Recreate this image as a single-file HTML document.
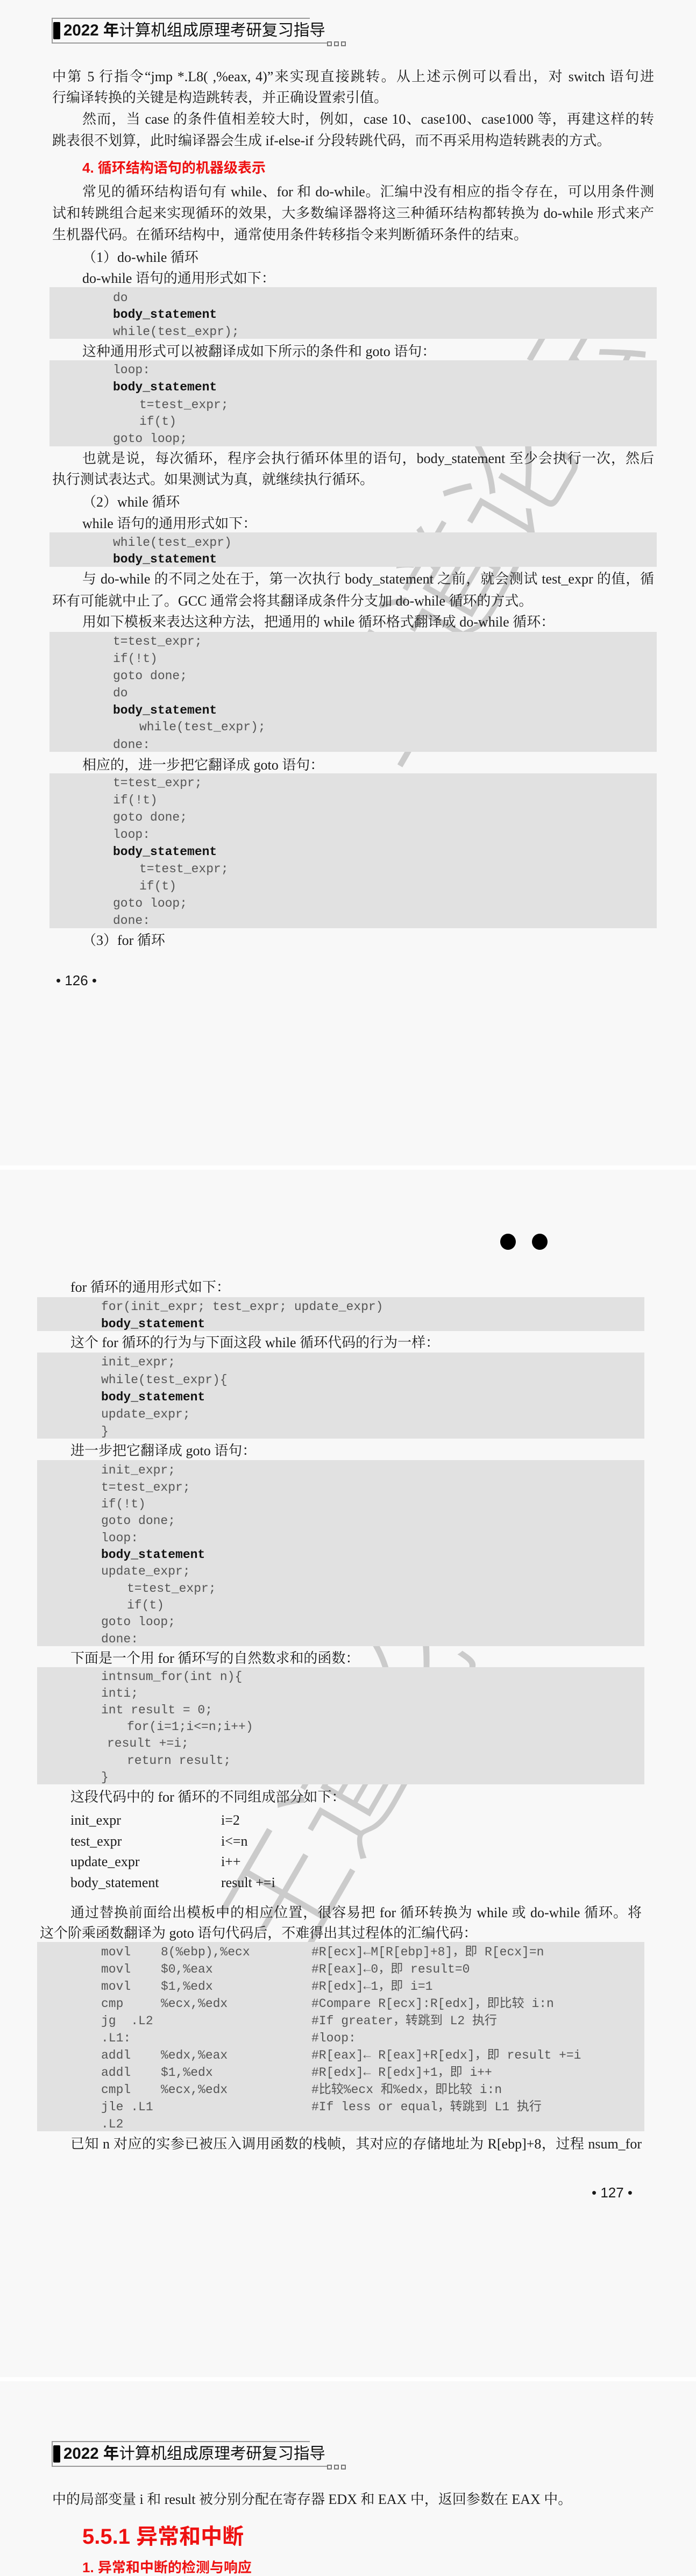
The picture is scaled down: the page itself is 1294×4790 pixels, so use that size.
<!DOCTYPE html>
<html><head><meta charset="utf-8">
<style>
html,body{margin:0;padding:0}
body{width:1294px;height:4775px;position:relative;background:#f8f8f8;overflow:hidden;font-family:"Liberation Serif","Noto Serif CJK SC",serif;color:#1a1a1a}
.l{position:absolute;font-size:26px;line-height:32px;white-space:nowrap}
.j{text-align:justify;text-align-last:justify;white-space:normal;overflow:hidden;height:32px}
.blk{position:absolute;background:#e1e1e1;z-index:2}
.c{position:absolute;font-family:"Liberation Mono","Noto Sans CJK SC",monospace;font-size:23px;line-height:32px;color:#555;white-space:pre;z-index:3}
.b{font-weight:bold;color:#111}
.h{color:#ee1111;font-weight:bold;font-family:"Liberation Sans","Noto Sans CJK SC",sans-serif}
.sep{position:absolute;left:0;width:1294px;background:#fff}
.wm{position:absolute;font-family:"Noto Sans CJK SC",sans-serif;font-weight:300;color:#cbcbcb;font-size:230px;white-space:nowrap;z-index:1;transform:rotate(-60deg);transform-origin:center}
.hdr{position:absolute;left:96px;width:478px;height:44px;border-top:2px solid #999;border-left:2px solid #999}
.hdr .line{position:absolute;left:-2px;bottom:-2px;width:512px;height:2px;background:#999}
.hdr .sq{position:absolute;bottom:-7px;width:9px;height:9px;border:2px solid #777;box-sizing:border-box}
.hdr .blk2{position:absolute;left:1px;top:6px;width:13px;height:32px;background:#000;border-radius:2px}
.hdr .t{position:absolute;left:20px;top:2px;font-family:"Liberation Sans","Noto Sans CJK SC",sans-serif;font-size:29.5px;line-height:40px;white-space:nowrap;color:#111}
.num{position:absolute;font-family:"Liberation Sans",sans-serif;font-size:26px;line-height:32px}
.z{z-index:3}
</style></head><body>

<!-- PAGE 1 -->
<div class="hdr" style="top:33px"><div class="blk2"></div><div class="t"><b>2022 年</b>计算机组成原理考研复习指导</div><div class="line"></div><div class="sq" style="left:510px"></div><div class="sq" style="left:523px"></div><div class="sq" style="left:536px"></div></div>

<div class="wm" style="left:420px;top:820px">王道论坛</div>

<div class="l j" style="left:97px;width:1119px;top:127px">中第 5 行指令“jmp *.L8( ,%eax, 4)”来实现直接跳转。从上述示例可以看出，对 switch 语句进</div>
<div class="l" style="left:97px;top:166px">行编译转换的关键是构造跳转表，并正确设置索引值。</div>
<div class="l j" style="left:153px;width:1063px;top:206px">然而，当 case 的条件值相差较大时，例如，case 10、case100、case1000 等，再建这样的转</div>
<div class="l" style="left:97px;top:246px">跳表很不划算，此时编译器会生成 if-else-if 分段转跳代码，而不再采用构造转跳表的方式。</div>
<div class="l h" style="left:153px;top:296px">4. 循环结构语句的机器级表示</div>
<div class="l j" style="left:153px;width:1063px;top:341px">常见的循环结构语句有 while、for 和 do-while。汇编中没有相应的指令存在，可以用条件测</div>
<div class="l j" style="left:97px;width:1119px;top:381px">试和转跳组合起来实现循环的效果，大多数编译器将这三种循环结构都转换为 do-while 形式来产</div>
<div class="l" style="left:97px;top:421px">生机器代码。在循环结构中，通常使用条件转移指令来判断循环条件的结束。</div>
<div class="l" style="left:153px;top:463px">（1）do-while 循环</div>
<div class="l" style="left:153px;top:502px">do-while 语句的通用形式如下：</div>
<div class="blk" style="left:92px;width:1129px;top:534px;height:96px"></div>
<div class="c" style="left:210px;top:538px">do</div>
<div class="c b" style="left:210px;top:569px">body_statement</div>
<div class="c" style="left:210px;top:601px">while(test_expr);</div>
<div class="l z" style="left:153px;top:638px">这种通用形式可以被翻译成如下所示的条件和 goto 语句：</div>
<div class="blk" style="left:92px;width:1129px;top:670px;height:160px"></div>
<div class="c" style="left:210px;top:672px">loop:</div>
<div class="c b" style="left:210px;top:704px">body_statement</div>
<div class="c" style="left:259px;top:737px">t=test_expr;</div>
<div class="c" style="left:259px;top:768px">if(t)</div>
<div class="c" style="left:210px;top:800px">goto loop;</div>
<div class="l j z" style="left:153px;width:1063px;top:837px">也就是说，每次循环，程序会执行循环体里的语句，body_statement 至少会执行一次，然后</div>
<div class="l z" style="left:97px;top:876px">执行测试表达式。如果测试为真，就继续执行循环。</div>
<div class="l z" style="left:153px;top:918px">（2）while 循环</div>
<div class="l z" style="left:153px;top:958px">while 语句的通用形式如下：</div>
<div class="blk" style="left:92px;width:1129px;top:990px;height:64px"></div>
<div class="c" style="left:210px;top:993px">while(test_expr)</div>
<div class="c b" style="left:210px;top:1024px">body_statement</div>
<div class="l j z" style="left:153px;width:1063px;top:1061px">与 do-while 的不同之处在于，第一次执行 body_statement 之前，就会测试 test_expr 的值，循</div>
<div class="l z" style="left:97px;top:1102px">环有可能就中止了。GCC 通常会将其翻译成条件分支加 do-while 循环的方式。</div>
<div class="l z" style="left:153px;top:1141px">用如下模板来表达这种方法，把通用的 while 循环格式翻译成 do-while 循环：</div>
<div class="blk" style="left:92px;width:1129px;top:1175px;height:223px"></div>
<div class="c" style="left:210px;top:1177px">t=test_expr;</div>
<div class="c" style="left:210px;top:1209px">if(!t)</div>
<div class="c" style="left:210px;top:1241px">goto done;</div>
<div class="c" style="left:210px;top:1273px">do</div>
<div class="c b" style="left:210px;top:1305px">body_statement</div>
<div class="c" style="left:259px;top:1336px">while(test_expr);</div>
<div class="c" style="left:210px;top:1369px">done:</div>
<div class="l z" style="left:153px;top:1407px">相应的，进一步把它翻译成 goto 语句：</div>
<div class="blk" style="left:92px;width:1129px;top:1438px;height:288px"></div>
<div class="c" style="left:210px;top:1440px">t=test_expr;</div>
<div class="c" style="left:210px;top:1472px">if(!t)</div>
<div class="c" style="left:210px;top:1504px">goto done;</div>
<div class="c" style="left:210px;top:1536px">loop:</div>
<div class="c b" style="left:210px;top:1568px">body_statement</div>
<div class="c" style="left:259px;top:1600px">t=test_expr;</div>
<div class="c" style="left:259px;top:1632px">if(t)</div>
<div class="c" style="left:210px;top:1664px">goto loop;</div>
<div class="c" style="left:210px;top:1696px">done:</div>
<div class="l" style="left:153px;top:1733px">（3）for 循环</div>
<div class="num" style="left:104px;top:1807px">• 126 •</div>

<div class="sep" style="top:2167px;height:8px"></div>

<!-- PAGE 2 -->
<div style="position:absolute;left:930px;top:2294px;width:29px;height:30px;border-radius:50%;background:#000"></div>
<div style="position:absolute;left:989px;top:2294px;width:29px;height:30px;border-radius:50%;background:#000"></div>

<div class="wm" style="left:230px;top:3050px">王道论坛</div>

<div class="l" style="left:131px;top:2378px">for 循环的通用形式如下：</div>
<div class="blk" style="left:69px;width:1129px;top:2412px;height:63px"></div>
<div class="c" style="left:188px;top:2414px">for(init_expr; test_expr; update_expr)</div>
<div class="c b" style="left:188px;top:2446px">body_statement</div>
<div class="l" style="left:131px;top:2481px">这个 for 循环的行为与下面这段 while 循环代码的行为一样：</div>
<div class="blk" style="left:69px;width:1129px;top:2515px;height:160px"></div>
<div class="c" style="left:188px;top:2517px">init_expr;</div>
<div class="c" style="left:188px;top:2550px">while(test_expr){</div>
<div class="c b" style="left:188px;top:2582px">body_statement</div>
<div class="c" style="left:188px;top:2614px">update_expr;</div>
<div class="c" style="left:188px;top:2646px">}</div>
<div class="l" style="left:131px;top:2682px">进一步把它翻译成 goto 语句：</div>
<div class="blk" style="left:69px;width:1129px;top:2715px;height:346px"></div>
<div class="c" style="left:188px;top:2718px">init_expr;</div>
<div class="c" style="left:188px;top:2750px">t=test_expr;</div>
<div class="c" style="left:188px;top:2781px">if(!t)</div>
<div class="c" style="left:188px;top:2812px">goto done;</div>
<div class="c" style="left:188px;top:2844px">loop:</div>
<div class="c b" style="left:188px;top:2875px">body_statement</div>
<div class="c" style="left:188px;top:2906px">update_expr;</div>
<div class="c" style="left:236px;top:2938px">t=test_expr;</div>
<div class="c" style="left:236px;top:2969px">if(t)</div>
<div class="c" style="left:188px;top:3000px">goto loop;</div>
<div class="c" style="left:188px;top:3032px">done:</div>
<div class="l z" style="left:131px;top:3068px">下面是一个用 for 循环写的自然数求和的函数：</div>
<div class="blk" style="left:69px;width:1129px;top:3100px;height:218px"></div>
<div class="c" style="left:188px;top:3102px">intnsum_for(int n){</div>
<div class="c" style="left:188px;top:3133px">inti;</div>
<div class="c" style="left:188px;top:3164px">int result = 0;</div>
<div class="c" style="left:236px;top:3195px">for(i=1;i&lt;=n;i++)</div>
<div class="c" style="left:199px;top:3226px">result +=i;</div>
<div class="c" style="left:236px;top:3258px">return result;</div>
<div class="c" style="left:188px;top:3289px">}</div>
<div class="l z" style="left:131px;top:3326px">这段代码中的 for 循环的不同组成部分如下：</div>
<div class="l z" style="left:131px;top:3369px">init_expr</div><div class="l z" style="left:411px;top:3369px">i=2</div>
<div class="l z" style="left:131px;top:3408px">test_expr</div><div class="l z" style="left:411px;top:3408px">i&lt;=n</div>
<div class="l z" style="left:131px;top:3446px">update_expr</div><div class="l z" style="left:411px;top:3446px">i++</div>
<div class="l z" style="left:131px;top:3485px">body_statement</div><div class="l z" style="left:411px;top:3485px">result +=i</div>
<div class="l j z" style="left:131px;width:1062px;top:3541px">通过替换前面给出模板中的相应位置，很容易把 for 循环转换为 while 或 do-while 循环。将</div>
<div class="l z" style="left:74px;top:3579px">这个阶乘函数翻译为 goto 语句代码后，不难得出其过程体的汇编代码：</div>
<div class="blk" style="left:69px;width:1129px;top:3611px;height:352px"></div>
<div class="c" style="left:188px;top:3614px">movl</div><div class="c" style="left:299px;top:3614px">8(%ebp),%ecx</div><div class="c" style="left:579px;top:3614px">#R[ecx]←M[R[ebp]+8]，即 R[ecx]=n</div>
<div class="c" style="left:188px;top:3646px">movl</div><div class="c" style="left:299px;top:3646px">$0,%eax</div><div class="c" style="left:579px;top:3646px">#R[eax]←0，即 result=0</div>
<div class="c" style="left:188px;top:3678px">movl</div><div class="c" style="left:299px;top:3678px">$1,%edx</div><div class="c" style="left:579px;top:3678px">#R[edx]←1，即 i=1</div>
<div class="c" style="left:188px;top:3710px">cmp</div><div class="c" style="left:299px;top:3710px">%ecx,%edx</div><div class="c" style="left:579px;top:3710px">#Compare R[ecx]:R[edx]，即比较 i:n</div>
<div class="c" style="left:188px;top:3742px">jg  .L2</div><div class="c" style="left:579px;top:3742px">#If greater，转跳到 L2 执行</div>
<div class="c" style="left:188px;top:3774px">.L1:</div><div class="c" style="left:579px;top:3774px">#loop:</div>
<div class="c" style="left:188px;top:3806px">addl</div><div class="c" style="left:299px;top:3806px">%edx,%eax</div><div class="c" style="left:579px;top:3806px">#R[eax]← R[eax]+R[edx]，即 result +=i</div>
<div class="c" style="left:188px;top:3838px">addl</div><div class="c" style="left:299px;top:3838px">$1,%edx</div><div class="c" style="left:579px;top:3838px">#R[edx]← R[edx]+1，即 i++</div>
<div class="c" style="left:188px;top:3870px">cmpl</div><div class="c" style="left:299px;top:3870px">%ecx,%edx</div><div class="c" style="left:579px;top:3870px">#比较%ecx 和%edx，即比较 i:n</div>
<div class="c" style="left:188px;top:3902px">jle .L1</div><div class="c" style="left:579px;top:3902px">#If less or equal，转跳到 L1 执行</div>
<div class="c" style="left:188px;top:3934px">.L2</div>
<div class="l j z" style="left:131px;width:1062px;top:3971px">已知 n 对应的实参已被压入调用函数的栈帧，其对应的存储地址为 R[ebp]+8，过程 nsum_for</div>
<div class="num" style="left:1100px;top:4061px">• 127 •</div>

<div class="sep" style="top:4420px;height:8px"></div>

<!-- PAGE 3 -->
<div class="hdr" style="top:4539px"><div class="blk2"></div><div class="t"><b>2022 年</b>计算机组成原理考研复习指导</div><div class="line"></div><div class="sq" style="left:510px"></div><div class="sq" style="left:523px"></div><div class="sq" style="left:536px"></div></div>
<div class="l" style="left:97px;top:4632px">中的局部变量 i 和 result 被分别分配在寄存器 EDX 和 EAX 中，返回参数在 EAX 中。</div>
<div class="l h" style="left:153px;top:4694px;font-size:40px;line-height:46px">5.5.1 异常和中断</div>
<div class="l h" style="left:153px;top:4758px">1. 异常和中断的检测与响应</div>
</body></html>
